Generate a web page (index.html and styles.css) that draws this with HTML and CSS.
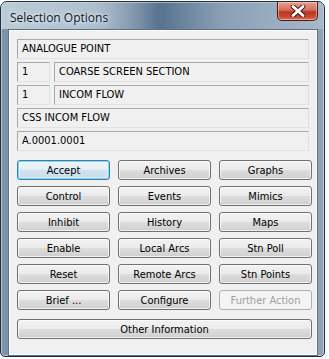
FILE: index.html
```html
<!DOCTYPE html>
<html lang="en">
<head>
  <meta charset="UTF-8">
  <title>Selection Options</title>
  <link rel="stylesheet" href="styles.css">
</head>
<body>
  <div class="window">
    <div class="titlebar">
      <span class="title">Selection Options</span>
      <button class="close-btn" title="Close">
        <svg width="16" height="12" viewBox="0 0 16 12">
          <path d="M3 1.5 L13 10.5 M13 1.5 L3 10.5" stroke="#3a1a14" stroke-width="4.6" stroke-linecap="round"/>
          <path d="M3 1.5 L13 10.5 M13 1.5 L3 10.5" stroke="#ffffff" stroke-width="2.8" stroke-linecap="round"/>
        </svg>
      </button>
    </div>
    <div class="client">
      <div class="fields">
        <div class="field">ANALOGUE POINT</div>
        <div class="field-row">
          <div class="field small">1</div>
          <div class="field grow">COARSE SCREEN SECTION</div>
        </div>
        <div class="field-row">
          <div class="field small">1</div>
          <div class="field grow">INCOM FLOW</div>
        </div>
        <div class="field">CSS INCOM FLOW</div>
        <div class="field">A.0001.0001</div>
      </div>
      <div class="button-grid">
        <button class="btn default">Accept</button>
        <button class="btn">Archives</button>
        <button class="btn">Graphs</button>
        <button class="btn">Control</button>
        <button class="btn">Events</button>
        <button class="btn">Mimics</button>
        <button class="btn">Inhibit</button>
        <button class="btn">History</button>
        <button class="btn">Maps</button>
        <button class="btn">Enable</button>
        <button class="btn">Local Arcs</button>
        <button class="btn">Stn Poll</button>
        <button class="btn">Reset</button>
        <button class="btn">Remote Arcs</button>
        <button class="btn">Stn Points</button>
        <button class="btn">Brief ...</button>
        <button class="btn">Configure</button>
        <button class="btn" disabled>Further Action</button>
      </div>
      <button class="btn wide">Other Information</button>
    </div>
  </div>
</body>
</html>
```

FILE: styles.css
```css
body {
  margin: 0;
  background: #ffffff;
  font-family: Tahoma, "DejaVu Sans Condensed", "Liberation Sans", sans-serif;
}

.window {
  width: 323px;
  height: 354px;
  margin-top: 1px;
  border: 1px solid #1f2f40;
  border-radius: 7px 7px 5px 5px;
  background: linear-gradient(90deg, #7d93a9 0%, #93a6b9 30%, #56728f 50%, #7f96ad 70%, #90a4b8 100%);
  box-shadow: inset 0 0 0 1px rgba(255, 255, 255, 0.45);
  display: flex;
  flex-direction: column;
  overflow: hidden;
}

.titlebar {
  height: 27px;
  flex: none;
  display: flex;
  align-items: flex-start;
  padding: 0 6px 0 9px;
  background: linear-gradient(90deg, rgba(210, 222, 232, 0.75) 0%, rgba(200, 214, 226, 0.6) 25%, rgba(90, 120, 150, 0.0) 48%, rgba(170, 188, 206, 0.35) 75%, rgba(190, 205, 220, 0.5) 100%);
}

.title {
  font-family: "Open Sans", "DejaVu Sans", sans-serif;
  font-size: 12px;
  color: #0b1724;
  margin-top: 7px;
  text-shadow: 0 0 6px #e8f0f6, 0 0 3px #e8f0f6;
}

.close-btn {
  margin-left: auto;
  width: 41px;
  height: 19px;
  padding: 0;
  border: 1px solid #4a1c16;
  border-top: none;
  border-radius: 0 0 5px 5px;
  background: linear-gradient(180deg, #e9a08f 0%, #d46f5b 45%, #b8361f 55%, #c94d35 85%, #dd7d62 100%);
  box-shadow: inset 0 0 0 1px rgba(255, 220, 210, 0.5);
  display: flex;
  align-items: center;
  justify-content: center;
}

.client {
  margin: 0 6px 0 7px;
  height: 318px;
  background: #f0f0f0;
  border: 1px solid #5b7088;
  box-shadow: inset 0 0 0 1px #ffffff;
  padding: 9px 5px 0 8px;
  display: flex;
  flex-direction: column;
}

.fields {
  display: flex;
  flex-direction: column;
  gap: 3px;
  margin-right: 3px;
}

.field-row {
  display: flex;
  gap: 4px;
}

.field {
  height: 18px;
  line-height: 18px;
  padding: 0 4px;
  font-size: 11px;
  color: #000000;
  background: #f0f0f0;
  border: 1px solid;
  border-color: #a9a9a9 #e2e2e2 #e2e2e2 #a9a9a9;
}

.field.small {
  width: 23px;
  flex: none;
}

.field.grow {
  flex: 1;
}

.button-grid {
  display: grid;
  grid-template-columns: repeat(3, 93px);
  grid-auto-rows: 20px;
  column-gap: 8px;
  row-gap: 6px;
  margin-top: 9px;
}

.btn {
  font-family: Tahoma, "DejaVu Sans Condensed", "Liberation Sans", sans-serif;
  font-size: 11px;
  color: #000000;
  padding: 0;
  height: 20px;
  border: 1px solid #707070;
  border-radius: 3px;
  background: linear-gradient(180deg, #f2f2f2 0%, #ebebeb 48%, #dddddd 52%, #cfcfcf 100%);
  box-shadow: inset 0 0 0 1px rgba(255, 255, 255, 0.7);
}

.btn.default {
  border-color: #3c7fb1;
  box-shadow: inset 0 0 0 1px #7fd4f5, inset 0 0 0 2px rgba(255, 255, 255, 0.4);
  background: linear-gradient(180deg, #eef5fa 0%, #e2edf5 48%, #d2e3ef 52%, #c6dbea 100%);
}

.btn:disabled {
  color: #a0a0a0;
  border-color: #adb2b5;
  background: #f4f4f4;
  box-shadow: none;
}

.btn.wide {
  width: 295px;
  margin-top: 9px;
}
```
